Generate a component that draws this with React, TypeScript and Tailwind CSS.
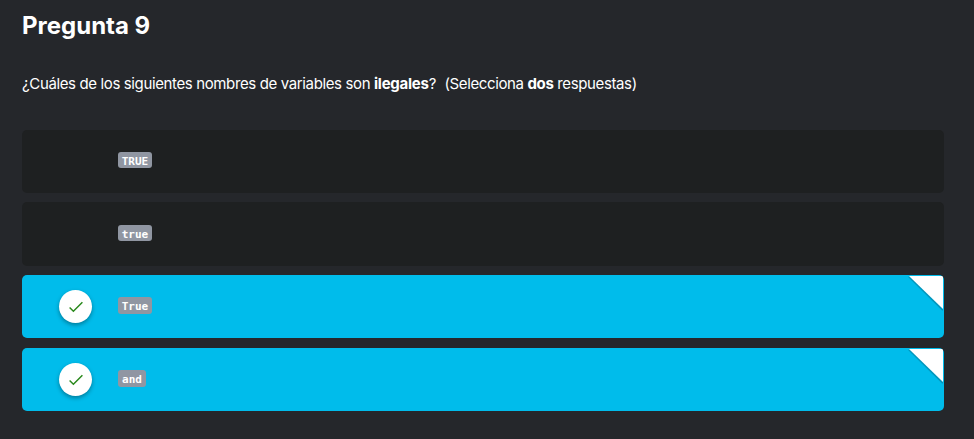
type Answer = { label: string; selected: boolean; width: string; row: string; badge: string };

const answers: Answer[] = [
  { label: "TRUE", selected: false, width: "w-[34px]", row: "h-[63px] mb-[9px]", badge: "h-4 mt-[22px] pt-0.5" },
  { label: "true", selected: false, width: "w-[34px]", row: "h-16 mb-[9px]", badge: "h-4 mt-[23px] pt-0.5" },
  { label: "True", selected: true, width: "w-[34px]", row: "h-[63px] mb-[10px]", badge: "h-[17px] mt-[22px] pt-px" },
  { label: "and", selected: true, width: "w-7", row: "h-[63px]", badge: "h-[17px] mt-[22px] pt-px" },
];

function AnswerRow({ answer }: { answer: Answer }) {
  return (
    <li
      className={`relative flex w-[922px] items-start overflow-hidden rounded-[5px] ${answer.row} ${
        answer.selected ? "bg-[#00bceb]" : "bg-[#1e2021]"
      }`}
    >
      <div className="w-24 shrink-0 pl-[37px] pt-[15px]">
        {answer.selected && (
          <div className="flex size-[33px] items-center justify-center rounded-full bg-white shadow-[0_2px_4px_rgba(0,0,0,0.35)]">
            <svg width="14" height="12" viewBox="0 0 14 12" fill="none" stroke="#2b8a1d" strokeWidth="1.5">
              <path d="M0.6 6.5 4.4 10.2 13.4 1.2" />
            </svg>
          </div>
        )}
      </div>
      <code
        className={`flex items-center justify-center rounded-[3px] bg-[#9096a2] font-['DejaVu_Sans_Mono',monospace] text-[11px] font-bold leading-none text-white ${answer.width} ${answer.badge}`}
      >
        {answer.label}
      </code>
      {answer.selected && (
        <svg className="absolute right-px top-px" width="36" height="36" viewBox="0 0 36 36">
          <path d="M2 0.5 36 34" stroke="#056b85" strokeOpacity="0.45" strokeWidth="2" />
          <path d="M2 0H36V33Z" fill="#fff" />
        </svg>
      )}
    </li>
  );
}

export default function App() {
  return (
    <main className="h-[439px] w-[974px] overflow-hidden bg-[#25272b] pl-[22px] font-['Inter',sans-serif] text-white">
      <h1 className="pt-[11px] text-2xl font-bold leading-[30px]">Pregunta 9</h1>
      <p className="mt-[33px] h-[56px] whitespace-pre text-[15px] leading-5 tracking-[-0.37px]">
        ¿Cuáles de los siguientes nombres de variables son <strong className="tracking-[-0.25px]">ilegales</strong>?
        <span className="tracking-normal">{"  "}</span>(Selecciona{" "}
        <strong>dos</strong> respuestas)
      </p>
      <ul>
        {answers.map((answer) => (
          <AnswerRow key={answer.label} answer={answer} />
        ))}
      </ul>
    </main>
  );
}
